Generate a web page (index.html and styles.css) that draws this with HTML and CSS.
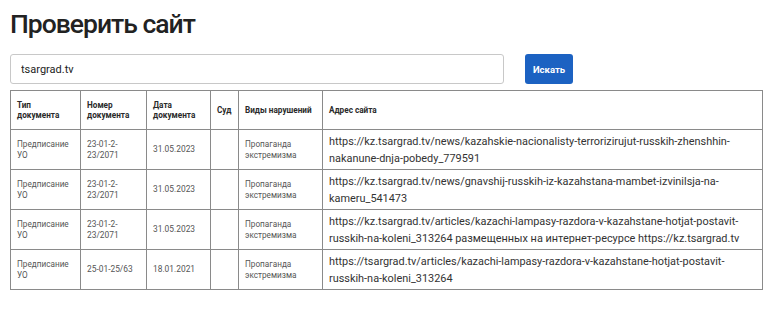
FILE: index.html
```html
<!DOCTYPE html>
<html lang="ru">
<head>
<meta charset="utf-8">
<link rel="stylesheet" href="styles.css">
</head>
<body>
<div class="page">
  <h1 class="title">Проверить сайт</h1>
  <form class="search">
    <input class="search-input" type="text" value="tsargrad.tv">
    <button class="search-btn" type="button">Искать</button>
  </form>
  <table class="results">
    <colgroup>
      <col class="c1"><col class="c2"><col class="c3"><col class="c4"><col class="c5"><col class="c6">
    </colgroup>
    <thead>
      <tr>
        <th>Тип документа</th>
        <th>Номер документа</th>
        <th>Дата документа</th>
        <th>Суд</th>
        <th>Виды нарушений</th>
        <th>Адрес сайта</th>
      </tr>
    </thead>
    <tbody>
      <tr>
        <td>Предписание УО</td>
        <td class="num">23-01-2-23/2071</td>
        <td class="num">31.05.2023</td>
        <td></td>
        <td>Пропаганда экстремизма</td>
        <td class="url">https://kz.tsargrad.tv/news/kazahskie-nacionalisty-terrorizirujut-russkih-zhenshhin-nakanune-dnja-pobedy_779591</td>
      </tr>
      <tr>
        <td>Предписание УО</td>
        <td class="num">23-01-2-23/2071</td>
        <td class="num">31.05.2023</td>
        <td></td>
        <td>Пропаганда экстремизма</td>
        <td class="url">https://kz.tsargrad.tv/news/gnavshij-russkih-iz-kazahstana-mambet-izvinilsja-na-kameru_541473</td>
      </tr>
      <tr>
        <td>Предписание УО</td>
        <td class="num">23-01-2-23/2071</td>
        <td class="num">31.05.2023</td>
        <td></td>
        <td>Пропаганда экстремизма</td>
        <td class="url">https://kz.tsargrad.tv/articles/kazachi-lampasy-razdora-v-kazahstane-hotjat-postavit-russkih-na-koleni_313264 размещенных на интернет-ресурсе https://kz.tsargrad.tv</td>
      </tr>
      <tr>
        <td>Предписание УО</td>
        <td class="num">25-01-25/63</td>
        <td class="num">18.01.2021</td>
        <td></td>
        <td>Пропаганда экстремизма</td>
        <td class="url">https://tsargrad.tv/articles/kazachi-lampasy-razdora-v-kazahstane-hotjat-postavit-russkih-na-koleni_313264</td>
      </tr>
    </tbody>
  </table>
</div>
</body>
</html>
```
FILE: styles.css
```css
* { box-sizing: border-box; }
html, body { margin: 0; padding: 0; background: #fff; }
body { font-family: Roboto, "Noto Sans", Arial, sans-serif; color: #222; }
.page { padding: 6px 10px 0 10px; }
.title {
  margin: 0;
  font-size: 26.5px;
  font-weight: 500;
  letter-spacing: -1px;
  line-height: 36px;
  color: #222;
}
.search {
  display: flex;
  align-items: center;
  gap: 21px;
  margin-top: 12px;
}
.search-input {
  width: 494px;
  height: 30px;
  border: 1px solid #c8c8c8;
  border-radius: 3px;
  padding: 0 10px;
  font-family: Roboto, Arial, sans-serif;
  font-size: 11px;
  color: #222;
  outline: none;
}
.search-btn {
  width: 48px;
  height: 30px;
  border: none;
  border-radius: 3px;
  background: #1c62c2;
  color: #fff;
  font-family: Roboto, Arial, sans-serif;
  font-weight: 700;
  font-size: 9.5px;
  padding: 0;
}
.results {
  margin-top: 6px;
  width: 752px;
  table-layout: fixed;
  border-collapse: collapse;
  border: 1px solid #8a8a8a;
}
.c1 { width: 70px; }
.c2 { width: 66px; }
.c3 { width: 64px; }
.c4 { width: 28px; }
.c5 { width: 84px; }
.c6 { width: 440px; }
.results th, .results td {
  border: 1px solid #8a8a8a;
  padding: 0 6px;
  text-align: left;
  vertical-align: middle;
  font-size: 8.2px;
  line-height: 10.5px;
}
.results th {
  height: 39px;
  font-weight: 700;
  color: #2a2a2a;
}
.results td {
  height: 40px;
  color: #555;
}
.results td.num { font-size: 8.4px; line-height: 11px; }
.results td.url {
  font-size: 10.9px;
  line-height: 17px;
  color: #333;
}
```
